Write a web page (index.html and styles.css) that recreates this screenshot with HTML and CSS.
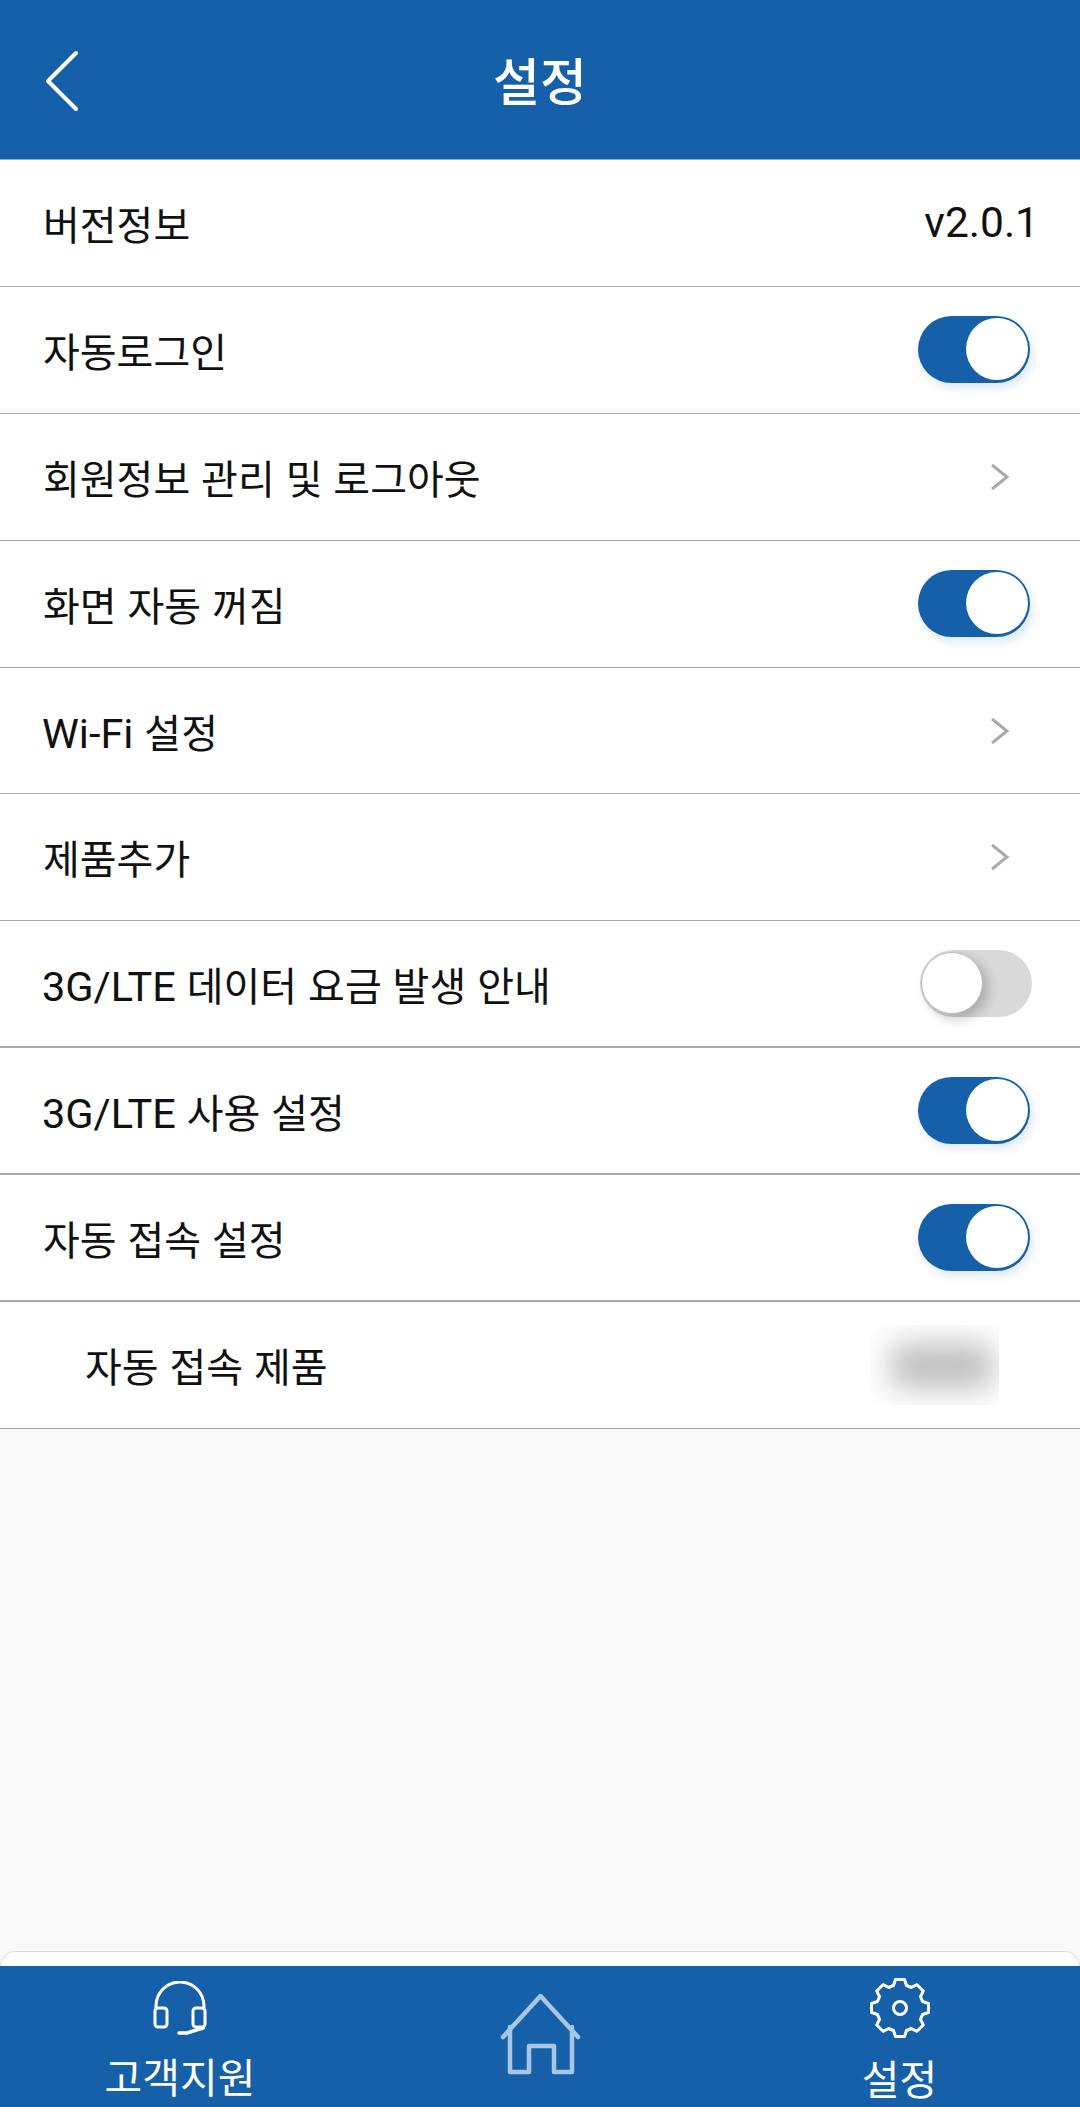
FILE: index.html
```html
<!DOCTYPE html>
<html lang="ko">
	<head>
		<meta charset="utf-8">
		<meta name="viewport" content="width=device-width">
		<title>설정</title>
		<link rel="stylesheet" href="styles.css">
	</head>

	<body>
		<div id="pg">
			<header class="top">
				<a class="back" href="#" aria-label="뒤로">
					<svg width="36" height="62" viewBox="0 0 36 62"><path d="M32 3 L4 31 L32 59"/></svg>
				</a>
				<h1>설정</h1>
			</header>

			<div class="list">
				<div class="row"><span>버전정보</span><span class="val">v2.0.1</span></div>
				<div class="row"><span>자동로그인</span><span class="tgl on"><i></i></span></div>
				<div class="row"><span>회원정보 관리 및 로그아웃</span><svg class="arr" width="20" height="28" viewBox="0 0 20 28"><path d="M2 2 L17 14 L2 26"/></svg></div>
				<div class="row"><span>화면 자동 꺼짐</span><span class="tgl on"><i></i></span></div>
				<div class="row"><span><span class="lat">Wi-Fi</span> 설정</span><svg class="arr" width="20" height="28" viewBox="0 0 20 28"><path d="M2 2 L17 14 L2 26"/></svg></div>
				<div class="row"><span>제품추가</span><svg class="arr" width="20" height="28" viewBox="0 0 20 28"><path d="M2 2 L17 14 L2 26"/></svg></div>
				<div class="row thick"><span><span class="lat">3G/LTE</span> 데이터 요금 발생 안내</span><span class="tgl off"><i></i></span></div>
				<div class="row thick"><span><span class="lat">3G/LTE</span> 사용 설정</span><span class="tgl on"><i></i></span></div>
				<div class="row thick"><span>자동 접속 설정</span><span class="tgl on"><i></i></span></div>
				<div class="row sub"><span>자동 접속 제품</span><span class="blur"><i></i></span></div>
			</div>

			<div class="sheet"></div>

			<nav class="tabs">
				<a class="tab help" href="#">
					<svg width="54" height="54" viewBox="0 0 54 54">
						<path d="M3 27 V25 A24 24 0 0 1 51 25 V27"/>
						<rect x="2" y="27" width="12" height="19" rx="3"/>
						<rect x="40" y="27" width="12" height="19" rx="3"/>
						<path d="M50 47 L34 52 H26" class="mic"/>
					</svg>
					<span>고객지원</span>
				</a>
				<a class="tab home" href="#" aria-label="홈">
					<svg width="83" height="81" viewBox="0 0 81 81">
						<path d="M3 43 L40.5 2 L78 43"/>
						<path d="M10 33 V78 H29 V52 H54 V78 H72 V33"/>
					</svg>
				</a>
				<a class="tab conf" href="#">
					<svg width="62" height="62" viewBox="-31 -31 62 62">
						<polygon points="-6.5,-22.5 -4.5,-28.5 4.5,-28.5 6.5,-22.5 11.3,-20.5 17,-23.3 23.3,-17 20.5,-11.3 22.5,-6.5 28.5,-4.5 28.5,4.5 22.5,6.5 20.5,11.3 23.3,17 17,23.3 11.3,20.5 6.5,22.5 4.5,28.5 -4.5,28.5 -6.5,22.5 -11.3,20.5 -17,23.3 -23.3,17 -20.5,11.3 -22.5,6.5 -28.5,4.5 -28.5,-4.5 -22.5,-6.5 -20.5,-11.3 -23.3,-17 -17,-23.3 -11.3,-20.5"/>
						<circle r="6.5"/>
					</svg>
					<span>설정</span>
				</a>
			</nav>
		</div>
	</body>
</html>
```

FILE: styles.css
```css
body {
	margin: 0;
	background-color: #f9f9f9;
	font-family: Roboto, "Noto Sans CJK KR", sans-serif;
	color: #111;
}
#pg {
	display: flex;
	flex-direction: column;
	width: 1080px;
	height: 2107px;
	overflow: hidden;
}

.top {
	display: flex;
	align-items: center;
	justify-content: center;
	position: relative;
	height: 159px;
	background-color: #1560a9;
	border-bottom: 1px solid #8fb0d3;
}
.top h1 {
	margin: -2px 0 0;
	font-size: 51px;
	font-weight: 500;
	color: #fff;
}
.back {
	position: absolute;
	left: 44px;
	top: 50px;
	line-height: 0;
}
.back path {
	fill: none;
	stroke: #fff;
	stroke-width: 4;
	stroke-linecap: round;
	stroke-linejoin: round;
}

.list {
	background-color: #fff;
}
.row {
	display: flex;
	align-items: center;
	justify-content: space-between;
	box-sizing: border-box;
	height: 126.9px;
	padding: 0 45px 0 43px;
	border-bottom: 1px solid #aaa;
	font-size: 40px;
	word-spacing: 1px;
}
.row.thick {
	border-bottom-width: 2px;
}
.row.sub {
	padding-left: 85px;
	padding-right: 81px;
}
.lat {
	margin-left: -1px;
	font-size: 41.5px;
}
.val {
	margin-right: -4px;
	font-size: 42.5px;
}
.arr {
	margin-right: 25px;
}
.arr path {
	fill: none;
	stroke: #aaa;
	stroke-width: 3;
}

.tgl {
	position: relative;
	display: block;
	width: 112px;
	height: 67px;
	border-radius: 34px;
}
.tgl i {
	position: absolute;
	top: 2px;
	width: 62px;
	height: 62px;
	border-radius: 50%;
	background-color: #fff;
}
.tgl.on {
	margin-right: 5px;
	background-color: #1560a9;
	box-shadow: 3px 5px 10px rgba(21, 96, 169, .14);
}
.tgl.on i {
	right: 2px;
}
.tgl.off {
	margin-right: 3px;
	background-color: #d9d9d9;
}
.tgl.off i {
	left: 1px;
	border: 1px solid #bbb;
	box-sizing: border-box;
	box-shadow: 5px 5px 12px rgba(0, 0, 0, .22);
}

.blur {
	display: block;
	width: 129px;
	height: 80px;
	overflow: hidden;
}
.blur i {
	display: block;
	width: 104px;
	height: 46px;
	margin: 18px 0 0 20px;
	border-radius: 14px;
	background-color: #c0c0c0;
	filter: blur(15px);
}

.sheet {
	box-sizing: border-box;
	height: 15px;
	margin-top: auto;
	background-color: #fff;
	border: 1px solid #ddd;
	border-bottom: 0;
	border-radius: 24px 24px 0 0;
}

.tabs {
	display: grid;
	grid-template-columns: repeat(3, 1fr);
	height: 141px;
	overflow: hidden;
	background-color: #1560a9;
}
.tab {
	display: flex;
	flex-direction: column;
	align-items: center;
	color: #fff;
	font-size: 41px;
	line-height: 44px;
	text-decoration: none;
}
.tab svg {
	display: block;
	flex: none;
}
.tab.help {
	padding-top: 15px;
}
.tab.help span {
	margin-top: 22px;
}
.tab.home {
	padding-top: 28px;
}
.tab.conf {
	padding-top: 11px;
	padding-right: 1px;
}
.tab.conf span {
	margin-top: 20px;
}
.help path, .help rect, .conf polygon, .conf circle {
	fill: none;
	stroke: #fff;
	stroke-width: 3;
	stroke-linejoin: round;
}
.help .mic {
	stroke-linecap: round;
}
.help path.mic {
	stroke-width: 3.5;
}
.home path {
	fill: none;
	stroke: #a9c5e6;
	stroke-width: 4.5;
	stroke-linecap: round;
	stroke-linejoin: round;
}
```
